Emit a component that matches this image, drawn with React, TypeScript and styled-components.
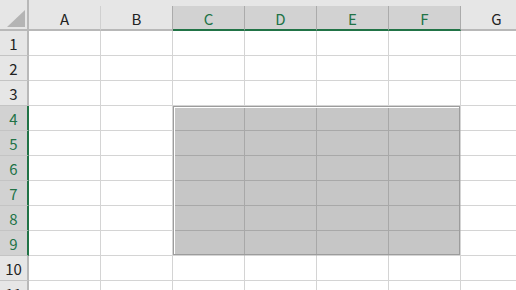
import React from "react";
import styled, { createGlobalStyle } from "styled-components";

const GREEN = "#217346";
const HEADER_BG = "#e6e6e6";
const HEADER_SEL_BG = "#d2d2d2";
const GRID = "#d4d4d4";
const SEL_FILL = "#c6c6c6";
const SEL_GRID = "#a8a8a8";

const COLUMNS = ["A", "B", "C", "D", "E", "F", "G"];
const ROWS = [1, 2, 3, 4, 5, 6, 7, 8, 9, 10, 11];

const SEL = { c0: 2, c1: 5, r0: 4, r1: 9 };

const GlobalStyle = createGlobalStyle`
  html, body {
    margin: 0;
    padding: 0;
    background: #ffffff;
    overflow: hidden;
  }
`;

const SheetEl = styled.div`
  position: relative;
  width: 516px;
  height: 290px;
  overflow: hidden;
  font-family: "Noto Sans CJK JP", "Liberation Sans", sans-serif;
  font-size: 15px;
  color: #222222;
`;

const HeaderRowEl = styled.div`
  display: flex;
  height: 31px;
`;

const CornerEl = styled.div`
  flex: none;
  box-sizing: border-box;
  width: 29px;
  height: 31px;
  background: ${HEADER_BG};
  border-right: 2px solid #b8b8b8;
  border-bottom: 2px solid #b8b8b8;
  display: flex;
  align-items: flex-end;
  justify-content: flex-end;
  padding: 0 2px 2px 0;
`;

const ColHeaderAreaEl = styled.div`
  display: flex;
  flex-direction: column;
  background: ${HEADER_BG};
`;

const StripEl = styled.div`
  height: 6px;
`;

const ColHeadersEl = styled.div`
  display: flex;
`;

const ColHeaderEl = styled.div<{ $selected: boolean; $edge: boolean }>`
  flex: none;
  box-sizing: border-box;
  width: 72px;
  height: 25px;
  display: flex;
  align-items: center;
  justify-content: center;
  background: ${(p) => (p.$selected ? HEADER_SEL_BG : HEADER_BG)};
  color: ${(p) => (p.$selected ? GREEN : "#222222")};
  border-right: 1px solid ${(p) => (p.$selected || p.$edge ? "#ababab" : "#d0d0d0")};
  border-bottom: 2px solid ${(p) => (p.$selected ? GREEN : "#b8b8b8")};
  padding-top: 1px;
`;

const RowEl = styled.div`
  display: flex;
  height: 25px;
`;

const RowHeaderEl = styled.div<{ $selected: boolean }>`
  flex: none;
  box-sizing: border-box;
  width: 29px;
  height: 25px;
  display: flex;
  align-items: center;
  justify-content: center;
  background: ${(p) => (p.$selected ? HEADER_SEL_BG : HEADER_BG)};
  color: ${(p) => (p.$selected ? GREEN : "#222222")};
  border-right: 2px solid ${(p) => (p.$selected ? GREEN : "#b8b8b8")};
  border-bottom: 1px solid #c4c4c4;
`;

const CellEl = styled.div<{ $selected: boolean; $innerRight: boolean; $innerBottom: boolean }>`
  flex: none;
  box-sizing: border-box;
  width: 72px;
  height: 25px;
  background: ${(p) => (p.$selected ? SEL_FILL : "#ffffff")};
  border-right: 1px solid ${(p) => (p.$innerRight ? SEL_GRID : GRID)};
  border-bottom: 1px solid ${(p) => (p.$innerBottom ? SEL_GRID : GRID)};
`;

const SelectionEl = styled.div`
  position: absolute;
  box-sizing: border-box;
  border: 1px solid #9c9c9c;
  box-shadow: inset 1px 1px 0 #ffffff;
  pointer-events: none;
`;

const CornerTriangle = () => (
  <svg width="18" height="17" viewBox="0 0 18 17">
    <polygon points="0,17 18,0 18,17" fill="#b4b4b4" />
  </svg>
);

const inCols = (c: number) => c >= SEL.c0 && c <= SEL.c1;
const inRows = (r: number) => r >= SEL.r0 && r <= SEL.r1;

export default function App() {
  return (
    <>
      <GlobalStyle />
      <SheetEl>
        <HeaderRowEl>
          <CornerEl>
            <CornerTriangle />
          </CornerEl>
          <ColHeaderAreaEl>
            <StripEl />
            <ColHeadersEl>
              {COLUMNS.map((c, i) => (
                <ColHeaderEl key={c} $selected={inCols(i)} $edge={i === SEL.c0 - 1}>
                  {c}
                </ColHeaderEl>
              ))}
            </ColHeadersEl>
          </ColHeaderAreaEl>
        </HeaderRowEl>
        {ROWS.map((r) => (
          <RowEl key={r}>
            <RowHeaderEl $selected={inRows(r)}>{r}</RowHeaderEl>
            {COLUMNS.map((c, i) => {
              const selected = inRows(r) && inCols(i);
              return (
                <CellEl
                  key={c}
                  $selected={selected}
                  $innerRight={selected && i < SEL.c1}
                  $innerBottom={selected && r < SEL.r1}
                />
              );
            })}
          </RowEl>
        ))}
        <SelectionEl
          style={{
            left: 29 + SEL.c0 * 72,
            top: 31 + (SEL.r0 - 1) * 25,
            width: (SEL.c1 - SEL.c0 + 1) * 72 - 1,
            height: (SEL.r1 - SEL.r0 + 1) * 25 - 1,
          }}
        />
      </SheetEl>
    </>
  );
}
